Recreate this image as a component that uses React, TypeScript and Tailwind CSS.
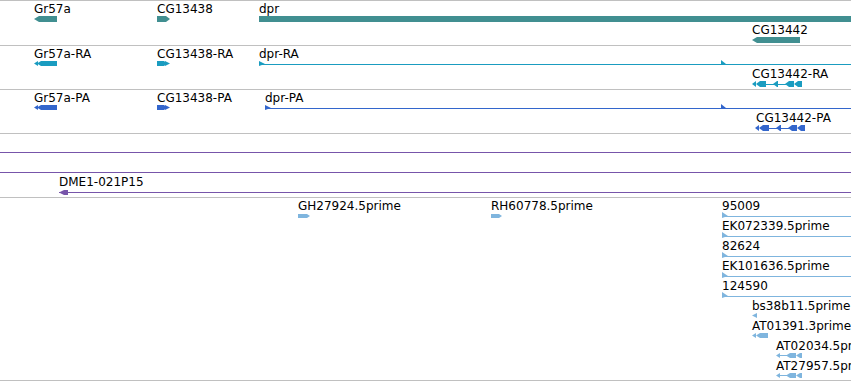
import React from 'react';

// feature colours, sampled from the track images
const GENE = '#418f91';
const RNA = '#1a9cc0';
const PEP = '#3366cc';
const CLONE = '#7755aa';
const EST = '#7fb5de';

type Label = { text: string; cls: string };

// heights include the 1px bottom rule (border-box)
function Track({ h, labels, children }: { h: string; labels: Label[]; children?: React.ReactNode }) {
  return (
    <div className={`relative ${h} overflow-hidden border-b border-[#c0c0c0]`}>
      <svg className="absolute inset-0" width="851" height="100%">
        {children}
      </svg>
      {labels.map((l) => (
        <span key={l.text} className={`absolute whitespace-nowrap text-[12px] leading-[14px] text-black ${l.cls}`}>
          {l.text}
        </span>
      ))}
    </div>
  );
}

// transcript glyph for CG13442-RA / -PA, drawn from x0 at row y (top)
const Cg13442 = ({ x0, y, fill }: { x0: number; y: number; fill: string }) => {
  const m = y + 3;
  const b = y + 6;
  const p = (pts: number[][]) => pts.map(([px, py]) => `${px + x0},${py}`).join(' ');
  return (
    <g fill={fill}>
      <polygon points={p([[0, m], [4, y], [4, b]])} />
      <polygon points={p([[4, m], [8, y], [14, y], [14, b], [8, b]])} />
      <rect x={x0 + 14} y={m} width={20} height={1} />
      <polygon points={p([[21, m], [25, y], [26, y], [26, b], [25, b]])} />
      <polygon points={p([[33, m], [37, y], [42, y], [42, b], [37, b]])} />
      <polygon points={p([[42, m], [46, y], [50, y], [50, b], [46, b]])} />
    </g>
  );
};

const AtGlyph = ({ y }: { y: number }) => (
  <g fill={EST}>
    <polygon points={`776,${y + 2.5} 780,${y} 780,${y + 5}`} />
    <rect x={780} y={y + 2} width={7} height={1} />
    <polygon points={`786,${y + 2.5} 790,${y} 796,${y} 796,${y + 5} 790,${y + 5}`} />
    <polygon points={`796,${y + 2.5} 800,${y} 802,${y} 802,${y + 5} 800,${y + 5}`} />
  </g>
);

export default function App() {
  return (
    <div className="w-[851px] h-[381px] overflow-hidden bg-white border-t border-[#c0c0c0] font-['DejaVu_Sans',sans-serif]">
      {/* genes */}
      <Track
        h="h-[45px]"
        labels={[
          { text: 'Gr57a', cls: 'left-[34px] top-[1px]' },
          { text: 'CG13438', cls: 'left-[157px] top-[1px]' },
          { text: 'dpr', cls: 'left-[259px] top-[1px]' },
          { text: 'CG13442', cls: 'left-[752px] top-[22px]' },
        ]}
      >
        <g fill={GENE}>
          <polygon points="34,18 39,15 57,15 57,21 39,21" />
          <polygon points="157,15 166,15 170,18 166,21 157,21" />
          <rect x="259" y="15" width="600" height="6" />
          <polygon points="752,39 757,36 800,36 800,42 757,42" />
        </g>
      </Track>

      {/* mRNA */}
      <Track
        h="h-[44px]"
        labels={[
          { text: 'Gr57a-RA', cls: 'left-[34px] top-[1px]' },
          { text: 'CG13438-RA', cls: 'left-[157px] top-[1px]' },
          { text: 'dpr-RA', cls: 'left-[259px] top-[1px]' },
          { text: 'CG13442-RA', cls: 'left-[752px] top-[21px]' },
        ]}
      >
        <g fill={RNA}>
          <polygon points="34,17.5 38,15 38,20" />
          <polygon points="37,17.5 41,15 57,15 57,20 41,20" />
          <polygon points="157,15 164,15 167,17.5 164,20 157,20" />
          <polygon points="165,15 170,17.5 165,20" />
          <polygon points="259,15 265,18 259,20" />
          <rect x="259" y="18" width="600" height="1" />
          <polygon points="721,14 726,18 721,19" />
        </g>
        <Cg13442 x0={752} y={35} fill={RNA} />
      </Track>

      {/* polypeptides */}
      <Track
        h="h-[44px]"
        labels={[
          { text: 'Gr57a-PA', cls: 'left-[34px] top-[1px]' },
          { text: 'CG13438-PA', cls: 'left-[157px] top-[1px]' },
          { text: 'dpr-PA', cls: 'left-[265px] top-[1px]' },
          { text: 'CG13442-PA', cls: 'left-[756px] top-[21px]' },
        ]}
      >
        <g fill={PEP}>
          <polygon points="34,17.5 38,15 38,20" />
          <polygon points="37,17.5 41,15 57,15 57,20 41,20" />
          <polygon points="157,15 164,15 167,17.5 164,20 157,20" />
          <polygon points="165,15 170,17.5 165,20" />
          <polygon points="265,15 271,18 265,20" />
          <rect x="265" y="18" width="600" height="1" />
          <polygon points="721,14 726,18 721,19" />
        </g>
        <Cg13442 x0={755} y={35} fill={PEP} />
      </Track>

      {/* BAC clones */}
      <Track h="h-[64px]" labels={[{ text: 'DME1-021P15', cls: 'left-[59px] top-[41px]' }]}>
        <g fill={CLONE}>
          <rect x="0" y="18" width="851" height="1" />
          <rect x="0" y="38" width="851" height="1" />
          <rect x="59" y="58" width="800" height="1" />
          <polygon points="59,58.5 64,56 68,56 68,61 64,61" />
        </g>
      </Track>

      {/* ESTs */}
      <Track
        h="h-[183px]"
        labels={[
          { text: 'GH27924.5prime', cls: 'left-[298px] top-[1px]' },
          { text: 'RH60778.5prime', cls: 'left-[491px] top-[1px]' },
          { text: '95009', cls: 'left-[722px] top-[1px]' },
          { text: 'EK072339.5prime', cls: 'left-[722px] top-[21px]' },
          { text: '82624', cls: 'left-[722px] top-[41px]' },
          { text: 'EK101636.5prime', cls: 'left-[722px] top-[61px]' },
          { text: '124590', cls: 'left-[722px] top-[81px]' },
          { text: 'bs38b11.5prime', cls: 'left-[752px] top-[101px]' },
          { text: 'AT01391.3prime', cls: 'left-[752px] top-[121px]' },
          { text: 'AT02034.5prime', cls: 'left-[776px] top-[141px]' },
          { text: 'AT27957.5prime', cls: 'left-[776px] top-[161px]' },
        ]}
      >
        <g fill={EST}>
          <polygon points="298,16 307,16 310,18 307,20 298,20" />
          <polygon points="491,16 499,16 502,18 499,20 491,20" />
          {[0, 1, 2, 3, 4].map((k) => (
            <g key={k}>
              <polygon points={`722,${14 + 20 * k} 728,${18 + 20 * k} 722,${20 + 20 * k}`} />
              <rect x="722" y={18 + 20 * k} width="140" height="1" />
            </g>
          ))}
          <polygon points="752,117.5 757,115 757,120" />
          <polygon points="752,137.5 756,135 756,140" />
          <polygon points="756,137.5 760,135 768,135 768,140 760,140" />
        </g>
        <AtGlyph y={155} />
        <AtGlyph y={175} />
      </Track>
    </div>
  );
}
